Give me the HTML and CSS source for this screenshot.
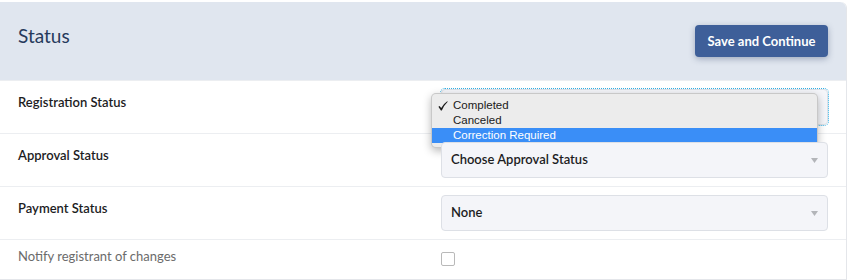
FILE: index.html
```html
<!DOCTYPE html>
<html lang="en-us">
    <head>
        <meta charset="UTF-8">
        <meta name="viewport" content="width=device-width, initial-scale=1.0">
        <title>Status</title>
        <link rel="stylesheet" href="styles.css">
    </head>
    <body>
        <section class="panel">
            <div class="panel-head">
                <h2 class="panel-title">Status</h2>
                <button class="save-btn">Save and Continue</button>
            </div>

            <div class="row">
                <label class="row-label">Registration Status</label>
                <div class="field">
                    <div class="select is-focused">
                        <span class="select-value"></span>
                        <svg class="select-arrow" width="7" height="5" viewBox="0 0 7 5"><path d="M0 0h7L3.5 5z"/></svg>
                    </div>
                    <!-- open native menu -->
                    <ul class="menu">
                        <li class="menu-item">
                            <svg class="menu-check" width="10" height="10" viewBox="0 0 10 10"><path d="M0.4 5.8 L1.6 4.9 L3.2 7.0 Q5.4 2.8 9.2 0.2 L9.7 0.7 Q6.3 3.8 3.8 9.6 L2.9 9.6 Z"/></svg>
                            Completed
                        </li>
                        <li class="menu-item">Canceled</li>
                        <li class="menu-item is-active">Correction Required</li>
                    </ul>
                </div>
            </div>

            <div class="row">
                <label class="row-label">Approval Status</label>
                <div class="field">
                    <div class="select">
                        <span class="select-value">Choose Approval Status</span>
                        <svg class="select-arrow" width="7" height="5" viewBox="0 0 7 5"><path d="M0 0h7L3.5 5z"/></svg>
                    </div>
                </div>
            </div>

            <div class="row">
                <label class="row-label">Payment Status</label>
                <div class="field">
                    <div class="select">
                        <span class="select-value">None</span>
                        <svg class="select-arrow" width="7" height="5" viewBox="0 0 7 5"><path d="M0 0h7L3.5 5z"/></svg>
                    </div>
                </div>
            </div>

            <div class="row row-notify">
                <label class="row-label">Notify registrant of changes</label>
                <div class="field">
                    <input type="checkbox" class="check">
                </div>
            </div>
        </section>
    </body>
</html>
```

FILE: styles.css
```css
/* General Styles */
body {
    margin: 0;
    padding-top: 2px;
    background-color: white;
    font-family: Lato, "Open Sans", sans-serif;
    color: #1d1d1f;
}

.panel {
    border-right: 1px solid #e4e6ea;
    border-bottom: 1px solid #e4e6ea;
    border-top-right-radius: 6px;
}

.panel-head {
    height: 78px;
    background-color: #e0e6ef;
    border-top-right-radius: 6px;
    display: flex;
    justify-content: space-between;
    align-items: flex-start;
    padding: 0 18px;
}

.panel-title {
    margin: 0;
    padding-top: 22px;
    font-size: 19px;
    font-weight: 400;
    line-height: 24px;
    color: #263a5c;
}

.save-btn {
    margin-top: 23px;
    width: 133px;
    height: 32px;
    border: none;
    border-radius: 4px;
    background-color: #3e5f99;
    color: white;
    font-family: inherit;
    font-size: 13px;
    font-weight: 700;
    box-shadow: 0 2px 6px rgba(40, 60, 100, 0.35);
    cursor: pointer;
}

.row {
    display: flex;
    padding: 8px 18px 8px 18px;
    border-top: 1px solid #eceef1;
}

.row:first-of-type {
    border-top: none;
}

.row-label {
    width: 423px;
    flex-shrink: 0;
    padding-top: 4px;
    font-size: 13px;
    font-weight: 600;
    line-height: 18px;
}

.field {
    flex: 1;
    position: relative;
}

.select {
    height: 34px;
    border: 1px solid #dde0e6;
    border-radius: 4px;
    background-color: #f4f5f9;
    display: flex;
    align-items: center;
    justify-content: space-between;
    padding: 0 9px 0 9px;
    font-size: 13px;
    font-weight: 600;
}

.select-value {
    margin-top: -2px;
}

.select-arrow {
    fill: #b3b5b9;
}

.select.is-focused {
    outline: 1px dotted #2fb0e6;
    outline-offset: 0;
}

/* open dropdown of the registration select */
.menu {
    position: absolute;
    top: 4px;
    left: -10px;
    width: 385px;
    margin: 0;
    padding: 4px 0 4px 0;
    list-style: none;
    background-color: #ececec;
    border: 1px solid rgba(0, 0, 0, 0.15);
    border-radius: 5px;
    box-shadow: 0 3px 9px rgba(0, 0, 0, 0.28);
    font-family: "Liberation Sans", Arial, sans-serif;
    font-size: 11.5px;
    color: #1a1a1a;
}

.menu-item {
    position: relative;
    height: 15px;
    line-height: 15px;
    padding-left: 21px;
}

.menu-item.is-active {
    background-color: #3a8ef7;
    color: white;
}

.menu-check {
    position: absolute;
    left: 6px;
    top: 3px;
    fill: #1a1a1a;
}

.row-notify {
    height: 29px;
    padding-top: 8px;
    padding-bottom: 2px;
}

.row-notify .row-label {
    padding-top: 0;
    line-height: 16px;
    font-weight: 400;
    color: #6b6b6b;
}

.check {
    appearance: none;
    margin: 4px 0 0 0;
    width: 14px;
    height: 14px;
    border: 1px solid #b9b9b9;
    border-radius: 2px;
    background-color: white;
}
```
